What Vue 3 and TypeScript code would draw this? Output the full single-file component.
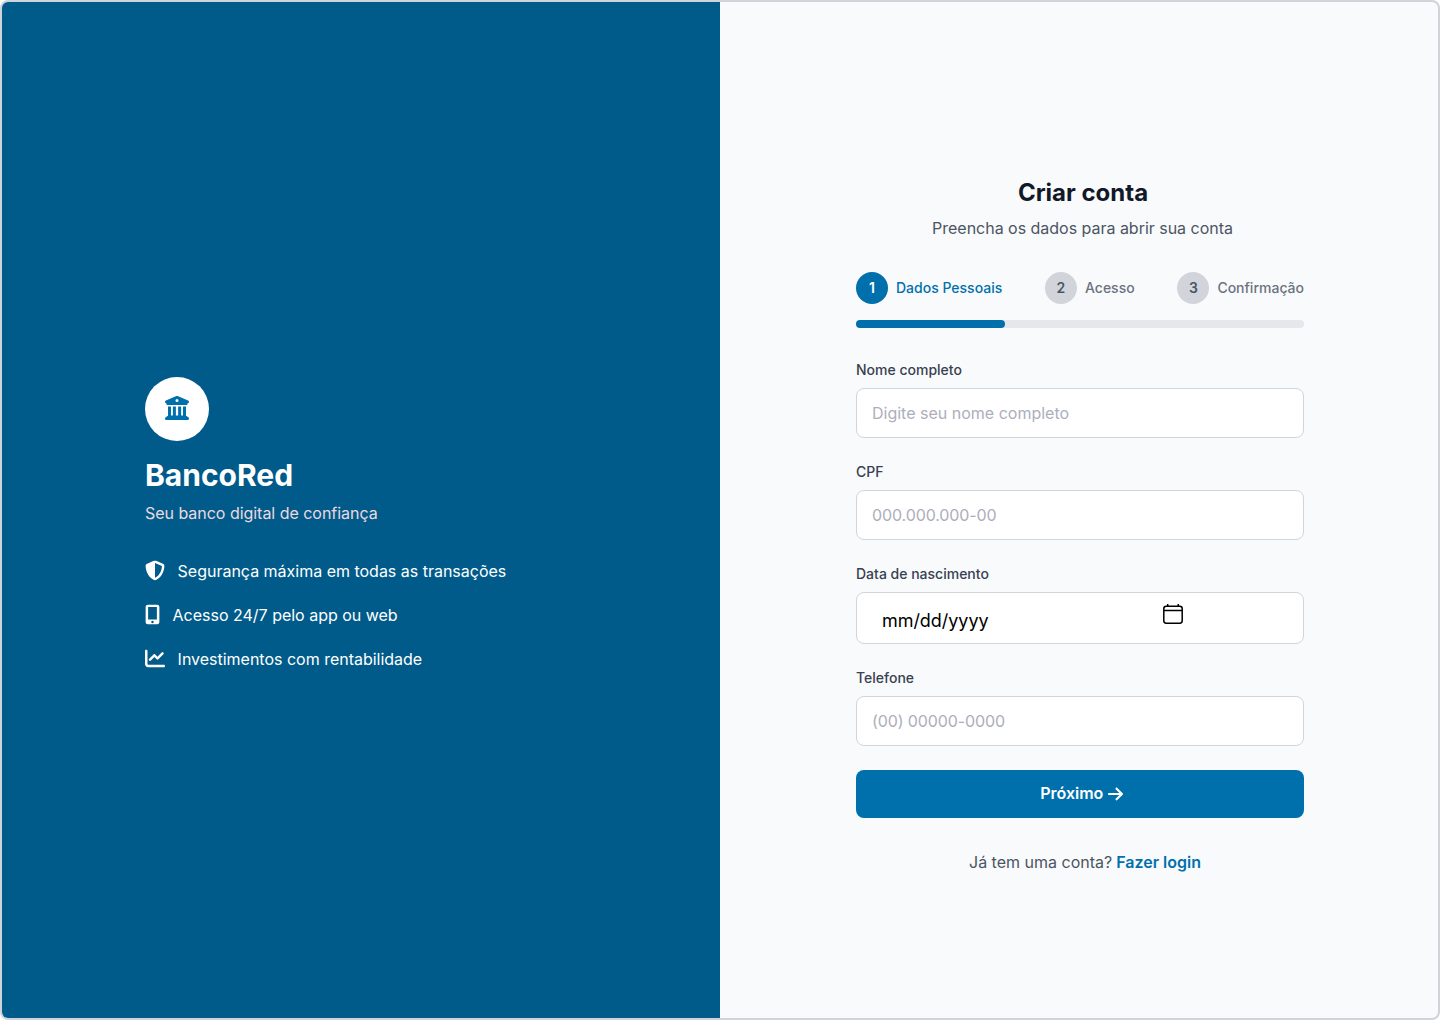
<script setup lang="ts">
import { ref } from 'vue'

interface Feature {
  kind: string
  text: string
  viewBox: string
  path: string
}

interface Step {
  number: number
  label: string
}

const features: Feature[] = [
  {
    kind: 'shield',
    text: 'Segurança máxima em todas as transações',
    viewBox: '0 0 512 512',
    path: 'M256 0c4.6 0 9.2 1 13.4 2.9L457.7 82.8c22 9.3 38.4 31 38.3 57.2c-.5 99.2-41.3 280.7-213.6 363.2c-16.7 8-36.1 8-52.8 0C57.3 420.7 16.5 239.2 16 140c-.1-26.2 16.3-47.9 38.3-57.2L242.7 2.9C246.8 1 251.4 0 256 0zm0 66.8l0 378.1C394 378 431.1 230.1 432 141.4L256 66.8z',
  },
  {
    kind: 'mobile',
    text: 'Acesso 24/7 pelo app ou web',
    viewBox: '0 0 384 512',
    path: 'M16 64C16 28.7 44.7 0 80 0L304 0c35.3 0 64 28.7 64 64l0 384c0 35.3-28.7 64-64 64L80 512c-35.3 0-64-28.7-64-64L16 64zM224 448a32 32 0 1 0 -64 0 32 32 0 1 0 64 0zM304 64L80 64l0 320 224 0 0-320z',
  },
  {
    kind: 'chart',
    text: 'Investimentos com rentabilidade',
    viewBox: '0 0 512 512',
    path: 'M64 64c0-17.7-14.3-32-32-32S0 46.3 0 64L0 400c0 44.2 35.8 80 80 80l400 0c17.7 0 32-14.3 32-32s-14.3-32-32-32L80 416c-8.8 0-16-7.2-16-16L64 64zm406.6 86.6c12.5-12.5 12.5-32.8 0-45.3s-32.8-12.5-45.3 0L320 210.7l-57.4-57.4c-12.5-12.5-32.8-12.5-45.3 0l-112 112c-12.5 12.5-12.5 32.8 0 45.3s32.8 12.5 45.3 0L240 221.3l57.4 57.4c12.5 12.5 32.8 12.5 45.3 0l128-128z',
  },
]

const steps: Step[] = [
  { number: 1, label: 'Dados Pessoais' },
  { number: 2, label: 'Acesso' },
  { number: 3, label: 'Confirmação' },
]

const current = ref(1)
const nome = ref('')
const cpf = ref('')
const telefone = ref('')
</script>

<template>
  <main class="page">
    <section class="brand">
      <div class="logo">
        <svg viewBox="0 0 512 512" aria-hidden="true">
          <path
            d="M243.4 2.6l-224 96c-14 6-21.8 21-18.7 35.8S16.8 160 32 160l0 8c0 13.3 10.7 24 24 24l400 0c13.3 0 24-10.7 24-24l0-8c15.2 0 28.3-10.7 31.3-25.6s-4.8-29.9-18.7-35.8l-224-96c-8-3.4-17.2-3.4-25.2 0zM128 224l-64 0 0 196.3c-.6 .3-1.2 .7-1.8 1.1l-48 32c-11.7 7.8-17 22.4-12.9 35.9S17.9 512 32 512l448 0c14.1 0 26.5-9.2 30.6-22.7s-1.1-28.1-12.9-35.9l-48-32c-.6-.4-1.2-.7-1.8-1.1L448 224l-64 0 0 192-40 0 0-192-64 0 0 192-48 0 0-192-64 0 0 192-40 0 0-192zM256 64a32 32 0 1 1 0 64 32 32 0 1 1 0-64z"
          />
        </svg>
      </div>
      <h1 class="brand-name">BancoRed</h1>
      <p class="tagline">Seu banco digital de confiança</p>
      <ul class="features">
        <li v-for="item in features" :key="item.kind" :class="['feature', item.kind]">
          <svg :viewBox="item.viewBox" aria-hidden="true"><path :d="item.path" /></svg>
          <span>{{ item.text }}</span>
        </li>
      </ul>
    </section>

    <section class="signup">
      <form class="form" @submit.prevent>
        <h2 class="title">Criar conta</h2>
        <p class="subtitle">Preencha os dados para abrir sua conta</p>

        <div class="steps">
          <div
            v-for="step in steps"
            :key="step.number"
            :class="['step', { active: step.number === current }]"
          >
            <span class="dot">{{ step.number }}</span>
            <span class="step-label">{{ step.label }}</span>
          </div>
        </div>
        <div class="track"><div class="bar"></div></div>

        <div class="field">
          <label for="nome">Nome completo</label>
          <input id="nome" v-model="nome" type="text" placeholder="Digite seu nome completo" />
        </div>
        <div class="field">
          <label for="cpf">CPF</label>
          <input id="cpf" v-model="cpf" class="numeric" type="text" placeholder="000.000.000-00" />
        </div>
        <div class="field">
          <label>Data de nascimento</label>
          <div class="date">
            <span class="date-text">mm/dd/yyyy</span>
            <svg class="calendar" viewBox="0 0 20 20" aria-hidden="true">
              <rect x="0.8" y="2.3" width="18.4" height="16.9" rx="2.4" />
              <path d="M1 6.6H19M4.7 0V2.5M15.3 0V2.5" />
            </svg>
          </div>
        </div>
        <div class="field">
          <label for="telefone">Telefone</label>
          <input
            id="telefone"
            v-model="telefone"
            class="numeric"
            type="text"
            placeholder="(00) 00000-0000"
          />
        </div>

        <button class="next" type="submit">
          <span>Próximo</span>
          <svg viewBox="0 0 448 512" aria-hidden="true">
            <path
              d="M438.6 278.6c12.5-12.5 12.5-32.8 0-45.3l-160-160c-12.5-12.5-32.8-12.5-45.3 0s-12.5 32.8 0 45.3L338.8 224 32 224c-17.7 0-32 14.3-32 32s14.3 32 32 32l306.7 0L233.4 393.4c-12.5 12.5-12.5 32.8 0 45.3s32.8 12.5 45.3 0l160-160z"
            />
          </svg>
        </button>
        <p class="login"><span>Já tem uma conta?</span><a href="#">Fazer login</a></p>
      </form>
    </section>
  </main>
</template>

<style>
body {
  background: #fff;
}
</style>

<style scoped>
.page {
  box-sizing: border-box;
  width: 1440px;
  height: 1020px;
  display: flex;
  overflow: hidden;
  border: 2px solid #ced4da;
  border-radius: 8px;
  background: #f9fafb;
  font-family: Inter, 'Liberation Sans', sans-serif;
  font-size: 16px;
  line-height: 24px;
}

h1,
h2,
p,
ul {
  margin: 0;
  padding: 0;
}

.brand {
  box-sizing: border-box;
  width: 718px;
  padding: 375px 0 0 143px;
  background: #005b8a;
  color: #fff;
}

.logo {
  box-sizing: border-box;
  width: 64px;
  height: 64px;
  padding: 19px 20px 21px;
  border-radius: 50%;
  background: #fff;
}

.logo svg {
  display: block;
  width: 24px;
  height: 24px;
  fill: #0070ad;
}

.brand-name {
  margin-top: 16px;
  font-size: 30px;
  font-weight: 700;
  line-height: 36px;
}

.tagline {
  margin-top: 8px;
  color: #ecd9e0;
  letter-spacing: -0.03px;
}

.features {
  margin-top: 34px;
  display: flex;
  flex-direction: column;
  gap: 20px;
  list-style: none;
}

.feature {
  display: flex;
  align-items: flex-start;
  gap: 12.6px;
  letter-spacing: -0.01px;
}

.feature svg {
  width: 20px;
  height: 20px;
  margin-top: 1px;
  fill: currentColor;
  transform: translateY(0.4px);
}

.feature.mobile svg {
  width: 15px;
}

.signup {
  box-sizing: border-box;
  flex: 1;
  padding: 175px 0 0 136px;
}

.form {
  width: 448px;
}

.title {
  padding-left: 6px;
  color: #111827;
  font-size: 24px;
  font-weight: 700;
  line-height: 32px;
  text-align: center;
}

.subtitle {
  margin-top: 7px;
  padding-left: 5px;
  color: #4b5563;
  letter-spacing: -0.02px;
  text-align: center;
}

.steps {
  margin-top: 32px;
  display: flex;
  justify-content: space-between;
}

.step {
  display: flex;
  align-items: center;
  gap: 8px;
  color: #6b7280;
  font-size: 14px;
  font-weight: 500;
  line-height: 20px;
}

.dot {
  width: 32px;
  border-radius: 50%;
  background: #d1d5db;
  color: #4b5563;
  font-weight: 600;
  line-height: 32px;
  text-align: center;
}

.step.active {
  color: #0070ad;
}

.step.active .dot {
  background: #0070ad;
  color: #fff;
}

.track {
  height: 8px;
  margin: 16px 0 32px;
  border-radius: 4px;
  background: #e5e7eb;
}

.bar {
  width: 33.333%;
  height: 8px;
  border-radius: 4px;
  background: #0070ad;
}

.field {
  margin-bottom: 24px;
}

.field label {
  display: block;
  margin-bottom: 8px;
  color: #374151;
  font-size: 14px;
  font-weight: 500;
  line-height: 20px;
}

.field input,
.date {
  box-sizing: border-box;
  display: block;
  width: 100%;
  height: 50px;
  padding: 0 15px;
  border: 1px solid #d1d5db;
  border-radius: 8px;
  background: #fff;
  color: #000;
  font: inherit;
}

.field input {
  outline: none;
}

.field .numeric {
  letter-spacing: -0.1px;
}

.field input::placeholder {
  color: #adaebc;
  opacity: 1;
}

.date {
  display: flex;
  justify-content: space-between;
  align-items: flex-start;
  height: 52px;
  padding: 11px 120px 0 25px;
}

.date-text {
  margin-top: 5px;
  font-size: 18px;
  letter-spacing: -0.05px;
}

.calendar {
  width: 20px;
  height: 20px;
  fill: none;
  stroke: #000;
  stroke-width: 1.5;
}

.next {
  display: flex;
  justify-content: center;
  align-items: center;
  gap: 4.5px;
  width: 100%;
  height: 48px;
  padding: 0 0 2px 3px;
  border: 0;
  border-radius: 8px;
  background: #0070ad;
  color: #fff;
  font: inherit;
  font-weight: 600;
}

.next svg {
  width: 15px;
  height: 18px;
  margin-top: 2px;
  fill: currentColor;
}

.login {
  display: flex;
  justify-content: center;
  gap: 4px;
  margin-top: 32px;
  padding-left: 10px;
  color: #4b5563;
}

.login a {
  color: #0070ad;
  font-weight: 600;
  text-decoration: none;
}
</style>
